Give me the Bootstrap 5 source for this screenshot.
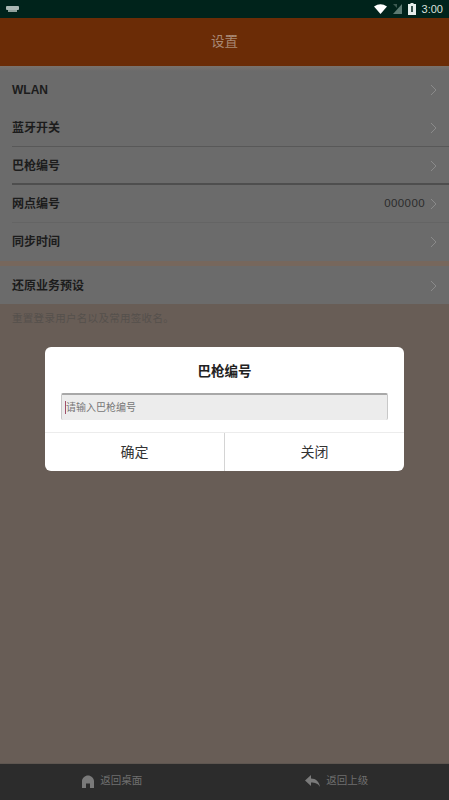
<!DOCTYPE html>
<html lang="zh"><head><meta charset="utf-8"><title>设置</title>
<link rel="stylesheet" href="https://cdn.jsdelivr.net/npm/bootstrap@5.3.0/dist/css/bootstrap.min.css">
<style>
html,body{height:100%;margin:0}
body{font-family:"Liberation Sans","Noto Sans CJK SC",sans-serif;background:#685d56;color:#222;overflow:hidden}
.shell{height:800px;width:449px;position:relative}
.statusbar{height:18px;background:#00231b;color:#d8e0dc;font-size:11px;padding:0 6px}
.topbar{height:48px;background:#6b2c06;color:#a98a76;font-size:13.5px}
.topshade{height:5px;background:linear-gradient(#7a726c,#6b6b6b)}
.setlist{background:#6b6b6b}
.setrow{height:38px;padding:0 12px;font-size:12px;color:#1c1c1c;font-weight:700;position:relative}
.setrow.lined::after{content:"";position:absolute;left:12px;right:0;bottom:0;border-bottom:1px solid #585858}
.setrow.faint::after{content:"";position:absolute;left:12px;right:0;bottom:0;border-bottom:1px solid #646464}
.setrow.heavy::after{content:"";position:absolute;left:12px;right:0;bottom:0;border-bottom:2px solid #4e4e4e}
.setrow.nudged{padding-top:1px}
.rowval{font-size:11.5px;color:#2c2c2c;letter-spacing:.4px;margin-right:5px;font-weight:400}
.gapstrip{height:5px;background:#77675c}
.helptext{font-size:10.5px;color:#55504c;padding:7px 12px 0;letter-spacing:.3px}
.dockbar{position:absolute;left:0;right:0;bottom:0;height:37px;background:#2c2c2c;border-top:1px solid #5e5650;color:#6f6f6f;font-size:10.5px;padding-bottom:2px}
.dockitem{gap:6px}
.dlg{position:absolute;left:45px;top:347px;width:359px;height:124px;background:#fff;border-radius:6px;overflow:hidden}
.dlgtitle{height:46px;font-size:13.5px;font-weight:700;color:#222;padding-top:5px}
.dlginput{margin:0 16px;height:27px;background:#ececec;border-top:2px solid #a8a8a8;border-left:1px solid #c8c8c8;border-right:1px solid #c8c8c8;border-radius:2px;font-size:10px;color:#777;padding-left:3px}
.caretbar{width:1px;height:13px;background:#a0506a;margin-right:0}
.dlgbtns{margin-top:12px;height:39px;border-top:1px solid #ececec;font-size:14px;color:#333}
.dlgbtns>div{flex:1 1 0}
.dlgbtns>div+div{border-left:1px solid #d4d4d4}
.chev{width:7px;height:12px;flex:none}
</style></head><body>
<div class="shell d-flex flex-column">
  <div class="statusbar d-flex align-items-center justify-content-between">
    <svg width="13" height="8" viewBox="0 0 13 8"><rect x="0" y="1" width="13" height="4" rx="1" fill="#aab8b4"/><rect x="2" y="5" width="9" height="2" fill="#8fa09b"/></svg>
    <div class="d-flex align-items-center" style="gap:6px">
      <svg width="13" height="10" viewBox="0 0 13 10"><path d="M0 2.500Q6.500-2 13 2.500L6.500 10Z" fill="#fff"/></svg>
      <svg width="9" height="10" viewBox="0 0 9 10"><path d="M9 0V10H0Z" fill="#5c7a72"/><path d="M0 0H4V4Z" fill="#3d5a52"/></svg>
      <svg width="8" height="12" viewBox="0 0 8 12"><path d="M2.500 0H5.500V1H8V12H0V1H2.500Z" fill="#e8eeec"/><path d="M4 3V9" stroke="#00231b" stroke-width="1.500"/></svg>
      <span>3:00</span>
    </div>
  </div>
  <div class="topbar d-flex align-items-center justify-content-center">设置</div>
  <div class="topshade"></div>
  <div class="setlist">
    <div class="setrow d-flex align-items-center justify-content-between"><span>WLAN</span><svg class="chev" viewBox="0 0 7 12"><path d="M1 1L6 6L1 11" fill="none" stroke="#8a8a8a"/></svg></div>
    <div class="setrow lined d-flex align-items-center justify-content-between"><span>蓝牙开关</span><svg class="chev" viewBox="0 0 7 12"><path d="M1 1L6 6L1 11" fill="none" stroke="#8a8a8a"/></svg></div>
    <div class="setrow heavy d-flex align-items-center justify-content-between"><span>巴枪编号</span><svg class="chev" viewBox="0 0 7 12"><path d="M1 1L6 6L1 11" fill="none" stroke="#8a8a8a"/></svg></div>
    <div class="setrow faint d-flex align-items-center justify-content-between"><span>网点编号</span><div class="d-flex align-items-center"><span class="rowval">000000</span><svg class="chev" viewBox="0 0 7 12"><path d="M1 1L6 6L1 11" fill="none" stroke="#8a8a8a"/></svg></div></div>
    <div class="setrow d-flex align-items-center justify-content-between"><span>同步时间</span><svg class="chev" viewBox="0 0 7 12"><path d="M1 1L6 6L1 11" fill="none" stroke="#8a8a8a"/></svg></div>
  </div>
  <div class="gapstrip"></div>
  <div class="setlist">
    <div class="setrow nudged d-flex align-items-center justify-content-between"><span>还原业务预设</span><svg class="chev" viewBox="0 0 7 12"><path d="M1 1L6 6L1 11" fill="none" stroke="#8a8a8a"/></svg></div>
  </div>
  <div class="helptext">重置登录用户名以及常用签收名。</div>

  <div class="dlg d-flex flex-column">
    <div class="dlgtitle d-flex align-items-center justify-content-center">巴枪编号</div>
    <div class="dlginput d-flex align-items-center"><span class="caretbar"></span>请输入巴枪编号</div>
    <div class="dlgbtns d-flex">
      <div class="d-flex align-items-center justify-content-center">确定</div>
      <div class="d-flex align-items-center justify-content-center">关闭</div>
    </div>
  </div>

  <div class="dockbar d-flex">
    <div class="dockitem flex-fill w-50 d-flex align-items-center justify-content-center">
      <svg width="12" height="13" viewBox="0 0 12 13"><path d="M6 0.500C9 0.500 12 3 12 6V13H8V8.500H4V13H0V6C0 3 3 0.500 6 0.500Z" fill="#7a7a7a"/></svg><span>返回桌面</span>
    </div>
    <div class="dockitem flex-fill w-50 d-flex align-items-center justify-content-center">
      <svg width="15" height="12" viewBox="0 0 15 12"><path d="M6 0V3.500C11 3.500 14 6.500 15 12C13 8.500 10 7.500 6 7.500V11L0 5.500Z" fill="#7a7a7a"/></svg><span>返回上级</span>
    </div>
  </div>
</div>
<script src="https://cdn.jsdelivr.net/npm/bootstrap@5.3.0/dist/js/bootstrap.bundle.min.js"></script>
</body></html>
